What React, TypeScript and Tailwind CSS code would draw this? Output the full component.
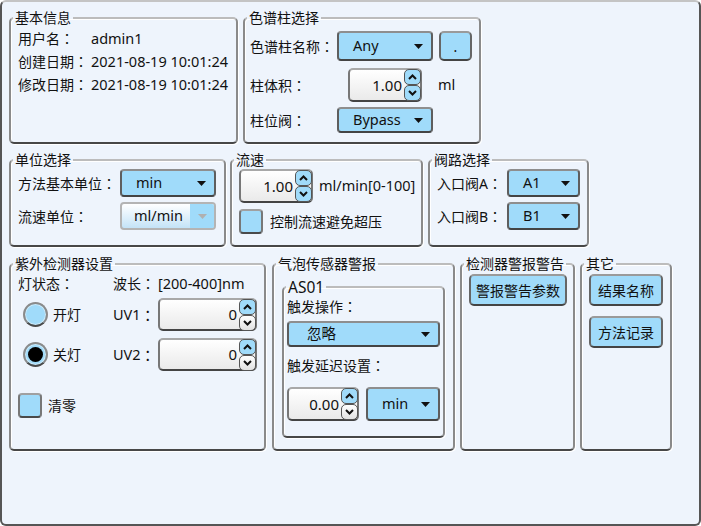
const font = "font-['Noto_Sans','Noto_Sans_CJK_SC',sans-serif]";

// full-width colon, centred as in the original UI font
const C = () => <span className="font-['Noto_Sans_CJK_TC',sans-serif]">：</span>;

const Group = ({ title, className, children }: { title: string; className: string; children?: React.ReactNode }) => {
    return (
        <fieldset className={`m-0 min-w-0 p-0 rounded-[5px] border-2 border-[#8a8a8a] border-t-[#bcbcbc] border-b-[#474747] shadow-[1px_1px_0_#fff,inset_1px_1px_0_#fff] ${className}`}>
            <legend className="ml-[2px] px-[2px] text-[14px] leading-[18px]">{title}</legend>
            {children}
        </fieldset>
    );
};

const Arrow = ({ color = '#111' }: { color?: string }) => (
    <svg width="9" height="5" viewBox="0 0 9 5"><path d="M0 0h9L4.5 5z" fill={color} /></svg>
);

const Combo = ({ text, className }: { text: string; className: string }) => (
    <div className={`flex items-center justify-between pl-[14px] pr-[8px] rounded-[4px] border-2 border-[#5e5e5e] border-t-[#8e8e8e] border-b-[#444] bg-[#a0dbfa] text-[14.5px] ${className}`}>
        <span>{text}</span>
        <Arrow />
    </div>
);

const SpinBtn = ({ up, blue }: { up?: boolean; blue?: boolean }) => (
    <div className={`flex items-center justify-center w-[17px] h-[16px] rounded-[5px] border border-[#555] ${blue ? 'bg-[#a0dbfa]' : 'bg-gradient-to-b from-white to-[#e2e2e2]'}`}>
        <svg width="9" height="6" viewBox="0 0 9 6">
            <path d={up ? 'M1 5L4.5 1.5 8 5' : 'M1 1l3.5 3.5L8 1'} fill="none" stroke="#111" strokeWidth="2" />
        </svg>
    </div>
);

const Spin = ({ value, className, downBlue }: { value: string; className: string; downBlue?: boolean }) => (
    <div className={`flex items-center justify-end gap-[2px] rounded-[5px] border-2 border-[#777] border-t-[#a8a8a8] border-b-[#444] bg-gradient-to-b from-white to-[#eaeaea] text-[15px] ${className}`}>
        <span>{value}</span>
        <div className="flex flex-col -mr-[1px]">
            <SpinBtn up blue />
            <SpinBtn blue={downBlue} />
        </div>
    </div>
);

const Check = () => (
    <div className="w-[24px] h-[25px] rounded-[4px] border-2 border-[#777] border-t-[#a0a0a0] border-b-[#4a4a4a] bg-[#a0dbfa]" />
);

const Radio = ({ checked }: { checked?: boolean }) => (
    <div className="flex items-center justify-center w-[25px] h-[25px] rounded-full border-2 border-[#8a8a8a] border-b-[#4a4a4a] bg-[#a0dbfa] shadow-[inset_0_0_0_1px_#cfeaf8]">
        {checked && <div className="w-[15px] h-[15px] rounded-full bg-black" />}
    </div>
);

const Btn = ({ text, className }: { text: string; className: string }) => (
    <div className={`flex items-center justify-center rounded-[5px] border-2 border-[#666] border-t-[#9a9a9a] border-b-[#444] bg-[#a0dbfa] ${className}`}>{text}</div>
);

export default function App() {
    return (
        <div className={`${font} text-[14px] text-[#111] w-[701px] h-[526px] bg-[#eef4fc] border-2 border-[#555] border-t-[#c4c4c4] rounded-[6px] pl-[7px] pt-[7px] flex flex-col gap-[8px]`}>
            {/* row 1 */}
            <div className="flex gap-[5px] h-[134px]">
                <Group title="基本信息" className="w-[229px] h-[135px]">
                    <div className="grid grid-cols-[73px_1fr] pl-[7px] leading-[23px]">
                        <span>用户名<C /></span><span className="text-[14.5px]">admin1</span>
                        <span>创建日期<C /></span><span className="text-[14.5px]">2021-08-19 10:01:24</span>
                        <span>修改日期<C /></span><span className="text-[14.5px]">2021-08-19 10:01:24</span>
                    </div>
                </Group>
                <Group title="色谱柱选择" className="w-[238px] h-[135px]">
                    <div className="flex flex-col pl-[5px]">
                        <div className="flex items-center h-[30px] mt-[4px]">
                            <span className="w-[87px]">色谱柱名称<C /></span>
                            <Combo text="Any" className="w-[96px] h-[30px]" />
                            <Btn text="." className="ml-[6px] w-[33px] h-[30px]" />
                        </div>
                        <div className="flex items-center h-[34px] mt-[7px]">
                            <span className="w-[98px]">柱体积<C /></span>
                            <Spin value="1.00" className="w-[74px] h-[34px]" downBlue />
                            <span className="ml-[16px] text-[14.5px]">ml</span>
                        </div>
                        <div className="flex items-center h-[26px] mt-[5px]">
                            <span className="w-[87px]">柱位阀<C /></span>
                            <Combo text="Bypass" className="w-[96px] h-[26px]" />
                        </div>
                    </div>
                </Group>
            </div>
            {/* row 2 */}
            <div className="flex h-[96px]">
                <Group title="单位选择" className="w-[217px] h-[96px]">
                    <div className="flex flex-col pl-[7px]">
                        <div className="flex items-center h-[28px]">
                            <span className="w-[102px]">方法基本单位<C /></span>
                            <Combo text="min" className="w-[96px] h-[28px]" />
                        </div>
                        <div className="flex items-center h-[28px] mt-[5px]">
                            <span className="w-[102px]">流速单位<C /></span>
                            <div className="flex w-[96px] h-[28px] rounded-[4px] border-2 border-[#b4b4b4] bg-gradient-to-b from-white to-[#c4e3f7] overflow-hidden text-[14.5px]">
                                <span className="flex-1 flex items-center pl-[12px]">ml/min</span>
                                <span className="w-[24px] flex items-center justify-center bg-[#a0dbfa]"><Arrow color="#b0b0b0" /></span>
                            </div>
                        </div>
                    </div>
                </Group>
                <Group title="流速" className="ml-[4px] w-[193px] h-[96px]">
                    <div className="flex flex-col pl-[7px]">
                        <div className="flex items-center h-[34px]">
                            <Spin value="1.00" className="w-[74px] h-[34px]" downBlue />
                            <span className="ml-[6px] text-[14.5px]">ml/min[0-100]</span>
                        </div>
                        <div className="flex items-center mt-[6px]">
                            <Check />
                            <span className="ml-[7px]">控制流速避免超压</span>
                        </div>
                    </div>
                </Group>
                <Group title="阀路选择" className="ml-[5px] w-[161px] h-[96px]">
                    <div className="flex flex-col pl-[7px]">
                        <div className="flex items-center h-[28px]">
                            <span className="w-[70px]">入口阀A<C /></span>
                            <Combo text="A1" className="w-[73px] h-[28px]" />
                        </div>
                        <div className="flex items-center h-[28px] mt-[5px]">
                            <span className="w-[70px]">入口阀B<C /></span>
                            <Combo text="B1" className="w-[73px] h-[28px]" />
                        </div>
                    </div>
                </Group>
            </div>
            {/* row 3 */}
            <div className="flex h-[196px]">
                <Group title="紫外检测器设置" className="w-[257px] h-[196px]">
                    <div className="grid grid-cols-[95px_45px_99px] pl-[7px]">
                        <span className="h-[20px] leading-[20px]">灯状态<C /></span>
                        <span className="h-[20px] leading-[20px]">波长<C /></span>
                        <span className="h-[20px] leading-[20px] text-[14.5px]">[200-400]nm</span>

                        <div className="flex items-center mt-[5px] h-[33px] pl-[5px] gap-[5px]"><Radio /><span>开灯</span></div>
                        <span className="flex items-center mt-[5px] h-[33px] text-[14.5px]">UV1<C /></span>
                        <Spin value="0" className="mt-[5px] w-[99px] h-[33px]" />

                        <div className="flex items-center mt-[7px] h-[33px] pl-[5px] gap-[5px]"><Radio checked /><span>关灯</span></div>
                        <span className="flex items-center mt-[7px] h-[33px] text-[14.5px]">UV2<C /></span>
                        <Spin value="0" className="mt-[7px] w-[99px] h-[33px]" />

                        <div className="col-span-3 flex items-center mt-[22px] gap-[6px]"><Check /><span>清零</span></div>
                    </div>
                </Group>
                <Group title="气泡传感器警报" className="ml-[6px] w-[183px] h-[196px]">
                    <div className="pl-[8px] pt-[5px]">
                        <fieldset className="m-0 min-w-0 p-0 w-[163px] h-[160px] rounded-[5px] border-2 border-[#8a8a8a] border-t-[#bcbcbc] border-b-[#474747] shadow-[1px_1px_0_#fff,inset_1px_1px_0_#fff]">
                            <legend className="ml-[2px] px-[2px] text-[15.5px] leading-[18px]">AS01</legend>
                            <div className="flex flex-col pl-[3px]">
                                <span className="mt-[1px] leading-[18px]">触发操作<C /></span>
                                <Combo text="忽略" className="mt-[5px] w-[153px] h-[26px] pl-[18px]" />
                                <span className="mt-[9px] leading-[18px]">触发延迟设置<C /></span>
                                <div className="flex mt-[12px] gap-[7px]">
                                    <Spin value="0.00" className="w-[72px] h-[34px]" />
                                    <Combo text="min" className="w-[74px] h-[34px]" />
                                </div>
                            </div>
                        </fieldset>
                    </div>
                </Group>
                <Group title="检测器警报警告" className="ml-[5px] w-[115px] h-[196px]">
                    <div className="pl-[7px] pt-[1px]">
                        <Btn text="警报警告参数" className="w-[98px] h-[32px]" />
                    </div>
                </Group>
                <Group title="其它" className="ml-[5px] w-[92px] h-[196px]">
                    <div className="flex flex-col gap-[10px] pl-[7px] pt-[1px]">
                        <Btn text="结果名称" className="w-[74px] h-[32px]" />
                        <Btn text="方法记录" className="w-[74px] h-[32px]" />
                    </div>
                </Group>
            </div>
        </div>
    );
}
